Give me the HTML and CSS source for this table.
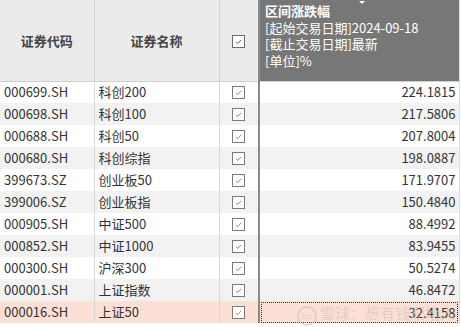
FILE: index.html
```html
<!DOCTYPE html>
<html lang="zh">
<head>
<meta charset="utf-8">
<link rel="stylesheet" href="styles.css">
</head>
<body>
<div class="wrap">
<table class="grid">
  <thead>
    <tr>
      <th class="c1">证券代码</th>
      <th class="c2">证券名称</th>
      <th class="c3"><span class="cb"><svg viewBox="0 0 11 11" width="11" height="11"><path d="M3 5.8 L4.8 7.4 L8 4" fill="none" stroke="#666" stroke-width="1"/></svg></span></th>
      <th class="c4">
        <span class="tri"></span>
        <div class="h4title">区间涨跌幅</div>
        <div>[起始交易日期]2024-09-18</div>
        <div>[截止交易日期]最新</div>
        <div>[单位]%</div>
      </th>
    </tr>
  </thead>
  <tbody>
    <tr><td class="c1">000699.SH</td><td class="c2">科创200</td><td class="c3"><span class="cb"><svg viewBox="0 0 11 11" width="11" height="11"><path d="M3 5.8 L4.8 7.4 L8 4" fill="none" stroke="#888" stroke-width="1"/></svg></span></td><td class="c4">224.1815</td></tr>
    <tr><td class="c1">000698.SH</td><td class="c2">科创100</td><td class="c3"><span class="cb"><svg viewBox="0 0 11 11" width="11" height="11"><path d="M3 5.8 L4.8 7.4 L8 4" fill="none" stroke="#888" stroke-width="1"/></svg></span></td><td class="c4">217.5806</td></tr>
    <tr><td class="c1">000688.SH</td><td class="c2">科创50</td><td class="c3"><span class="cb"><svg viewBox="0 0 11 11" width="11" height="11"><path d="M3 5.8 L4.8 7.4 L8 4" fill="none" stroke="#888" stroke-width="1"/></svg></span></td><td class="c4">207.8004</td></tr>
    <tr><td class="c1">000680.SH</td><td class="c2">科创综指</td><td class="c3"><span class="cb"><svg viewBox="0 0 11 11" width="11" height="11"><path d="M3 5.8 L4.8 7.4 L8 4" fill="none" stroke="#888" stroke-width="1"/></svg></span></td><td class="c4">198.0887</td></tr>
    <tr><td class="c1">399673.SZ</td><td class="c2">创业板50</td><td class="c3"><span class="cb"><svg viewBox="0 0 11 11" width="11" height="11"><path d="M3 5.8 L4.8 7.4 L8 4" fill="none" stroke="#888" stroke-width="1"/></svg></span></td><td class="c4">171.9707</td></tr>
    <tr><td class="c1">399006.SZ</td><td class="c2">创业板指</td><td class="c3"><span class="cb"><svg viewBox="0 0 11 11" width="11" height="11"><path d="M3 5.8 L4.8 7.4 L8 4" fill="none" stroke="#888" stroke-width="1"/></svg></span></td><td class="c4">150.4840</td></tr>
    <tr><td class="c1">000905.SH</td><td class="c2">中证500</td><td class="c3"><span class="cb"><svg viewBox="0 0 11 11" width="11" height="11"><path d="M3 5.8 L4.8 7.4 L8 4" fill="none" stroke="#888" stroke-width="1"/></svg></span></td><td class="c4">88.4992</td></tr>
    <tr><td class="c1">000852.SH</td><td class="c2">中证1000</td><td class="c3"><span class="cb"><svg viewBox="0 0 11 11" width="11" height="11"><path d="M3 5.8 L4.8 7.4 L8 4" fill="none" stroke="#888" stroke-width="1"/></svg></span></td><td class="c4">83.9455</td></tr>
    <tr><td class="c1">000300.SH</td><td class="c2">沪深300</td><td class="c3"><span class="cb"><svg viewBox="0 0 11 11" width="11" height="11"><path d="M3 5.8 L4.8 7.4 L8 4" fill="none" stroke="#888" stroke-width="1"/></svg></span></td><td class="c4">50.5274</td></tr>
    <tr><td class="c1">000001.SH</td><td class="c2">上证指数</td><td class="c3"><span class="cb"><svg viewBox="0 0 11 11" width="11" height="11"><path d="M3 5.8 L4.8 7.4 L8 4" fill="none" stroke="#888" stroke-width="1"/></svg></span></td><td class="c4">46.8472</td></tr>
    <tr class="sel"><td class="c1">000016.SH</td><td class="c2">上证50</td><td class="c3"><span class="cb"><svg viewBox="0 0 11 11" width="11" height="11"><path d="M3 5.8 L4.8 7.4 L8 4" fill="none" stroke="#888" stroke-width="1"/></svg></span></td><td class="c4"><span class="focus">32.4158</span></td></tr>
  </tbody>
</table>
<div class="wm"><span class="wm-logo">∞</span>雪球：想有钱职场人</div>
</div>
</body>
</html>
```

FILE: styles.css
```css
html, body {
  margin: 0;
  padding: 0;
  background: #ffffff;
}
body {
  font-family: "Noto Sans CJK SC", "Noto Sans", sans-serif;
  font-size: 13px;
  color: #333;
  width: 461px;
  height: 327px;
  overflow: hidden;
}
.wrap {
  position: relative;
  width: 461px;
  height: 327px;
  overflow: hidden;
}
.grid {
  border-collapse: collapse;
  table-layout: fixed;
  width: 459px;
}
.grid th, .grid td {
  padding: 0;
  overflow: hidden;
  white-space: nowrap;
  box-sizing: border-box;
}
thead th {
  height: 81px;
  background: #ebebeb;
  border-right: 1px solid #d2d2d2;
  border-bottom: 1px solid #cfcfcf;
  font-weight: bold;
  color: #444;
  font-size: 13px;
  vertical-align: middle;
}
th.c1 { width: 94px; }
th.c2 { width: 125px; }
th.c3 { width: 40px; border-right: 2px solid #8a8a8a; }
th.c4 {
  width: 200px;
  position: relative;
  background: #777777;
  color: #ffffff;
  font-weight: normal;
  text-align: left;
  vertical-align: top;
  padding: 3px 0 0 5px;
  line-height: 16.5px;
  font-size: 13px;
  border-right: 1px solid #e0e0e0;
}
.h4title { font-weight: bold; }
.tri {
  position: absolute;
  top: 1px;
  left: 99px;
  width: 0;
  height: 0;
  border-left: 3px solid transparent;
  border-right: 3px solid transparent;
  border-top: 3px solid #ffffff;
}
tbody td {
  height: 22px;
  line-height: 20px;
  border-right: 1px solid #d8d8d8;
}
tbody tr:nth-child(even) td { background: #f2f2f2; }
tbody td.c1 { padding-left: 4px; }
tbody td.c2 { padding-left: 4px; }
tbody td.c3 { text-align: center; border-right: 2px solid #8a8a8a; }
tbody td.c4 { text-align: right; padding-right: 3px; border-right: 1px solid #e0e0e0; }
td.c3, th.c3 { text-align: center; }
.cb {
  display: inline-block;
  width: 13px;
  height: 13px;
  box-sizing: border-box;
  border: 1px solid #7a7a7a;
  background: #fff;
  vertical-align: middle;
  line-height: 0;
  margin-top: -2px;
}
thead .cb { border-color: #6a6a6a; }
.cb svg { display: block; }
tbody tr.sel td { background: #fde0d5; }
tbody tr.sel td.c4 { padding: 0; }
.focus {
  display: block;
  box-sizing: border-box;
  margin: 1px 1px 0 1px;
  height: 21px;
  line-height: 19px;
  border: 1px dotted #3a2a20;
  padding-right: 1px;
  text-align: right;
}
.wm {
  position: absolute;
  left: 297px;
  top: 303px;
  font-size: 15px;
  line-height: 20px;
  white-space: nowrap;
  color: rgba(205, 195, 190, 0.6);
  pointer-events: none;
}
.wm-logo {
  display: inline-block;
  width: 16px;
  height: 16px;
  border-radius: 50%;
  border: 2px solid rgba(205, 195, 190, 0.6);
  font-size: 11px;
  line-height: 16px;
  text-align: center;
  margin-right: 3px;
  vertical-align: -2px;
}
```
